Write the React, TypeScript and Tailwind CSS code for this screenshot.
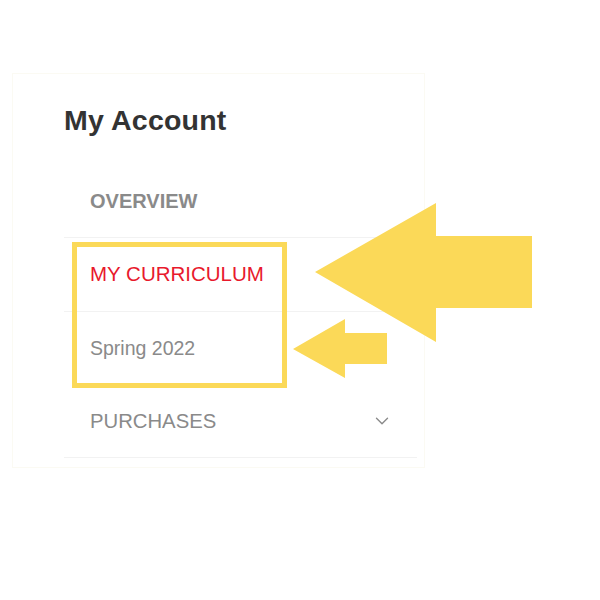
import React from 'react'
import { ChevronDown } from 'lucide-react'

const font = { fontFamily: '"Liberation Sans", Arial, sans-serif' }

export default function App() {
  return (
    <div className="relative w-[600px] h-[600px] bg-white overflow-hidden" style={font}>
      {/* account panel */}
      <div className="ml-[12px] mt-[73px] w-[413px] h-[395px] border border-[#fbfaf3] pl-[51px] pr-[7px] pt-[30px]">
        <h2 className="text-[28.5px] leading-[32px] font-bold text-[#333] tracking-[0.2px]">My Account</h2>
        <ul className="mt-[28px]">
          <li className="h-[74px] flex items-center pl-[26px] border-b border-[#f2f2f2] text-[20px] font-bold text-[#8a8a8a]">
            OVERVIEW
          </li>
          <li className="h-[74px] flex items-center pl-[26px] border-b border-[#f2f2f2] text-[20.5px] text-[#e8192c]">
            MY CURRICULUM
          </li>
          <li className="h-[73px] flex items-center pl-[26px] text-[19.5px] text-[#8a8a8a]">
            Spring 2022
          </li>
          <li className="h-[73px] flex items-center justify-between pl-[26px] pr-[24px] border-b border-[#f2f2f2] text-[20.3px] text-[#8a8a8a]">
            <span>PURCHASES</span>
            <ChevronDown className="w-[22px] h-[22px] text-[#8a8a8a]" strokeWidth={1.5} />
          </li>
        </ul>
      </div>

      {/* highlight box */}
      <div className="absolute left-[72px] top-[242px] w-[215px] h-[146px] border-[5px] border-[#fbd958]" />

      {/* arrows */}
      <svg className="absolute inset-0" width="600" height="600" viewBox="0 0 600 600">
        <polygon fill="#fbd958" points="315,272 436,203 436,236 532,236 532,308 436,308 436,342" />
        <polygon fill="#fbd958" points="293,349 345,319 345,333 387,333 387,364 345,364 345,378" />
      </svg>
    </div>
  )
}
